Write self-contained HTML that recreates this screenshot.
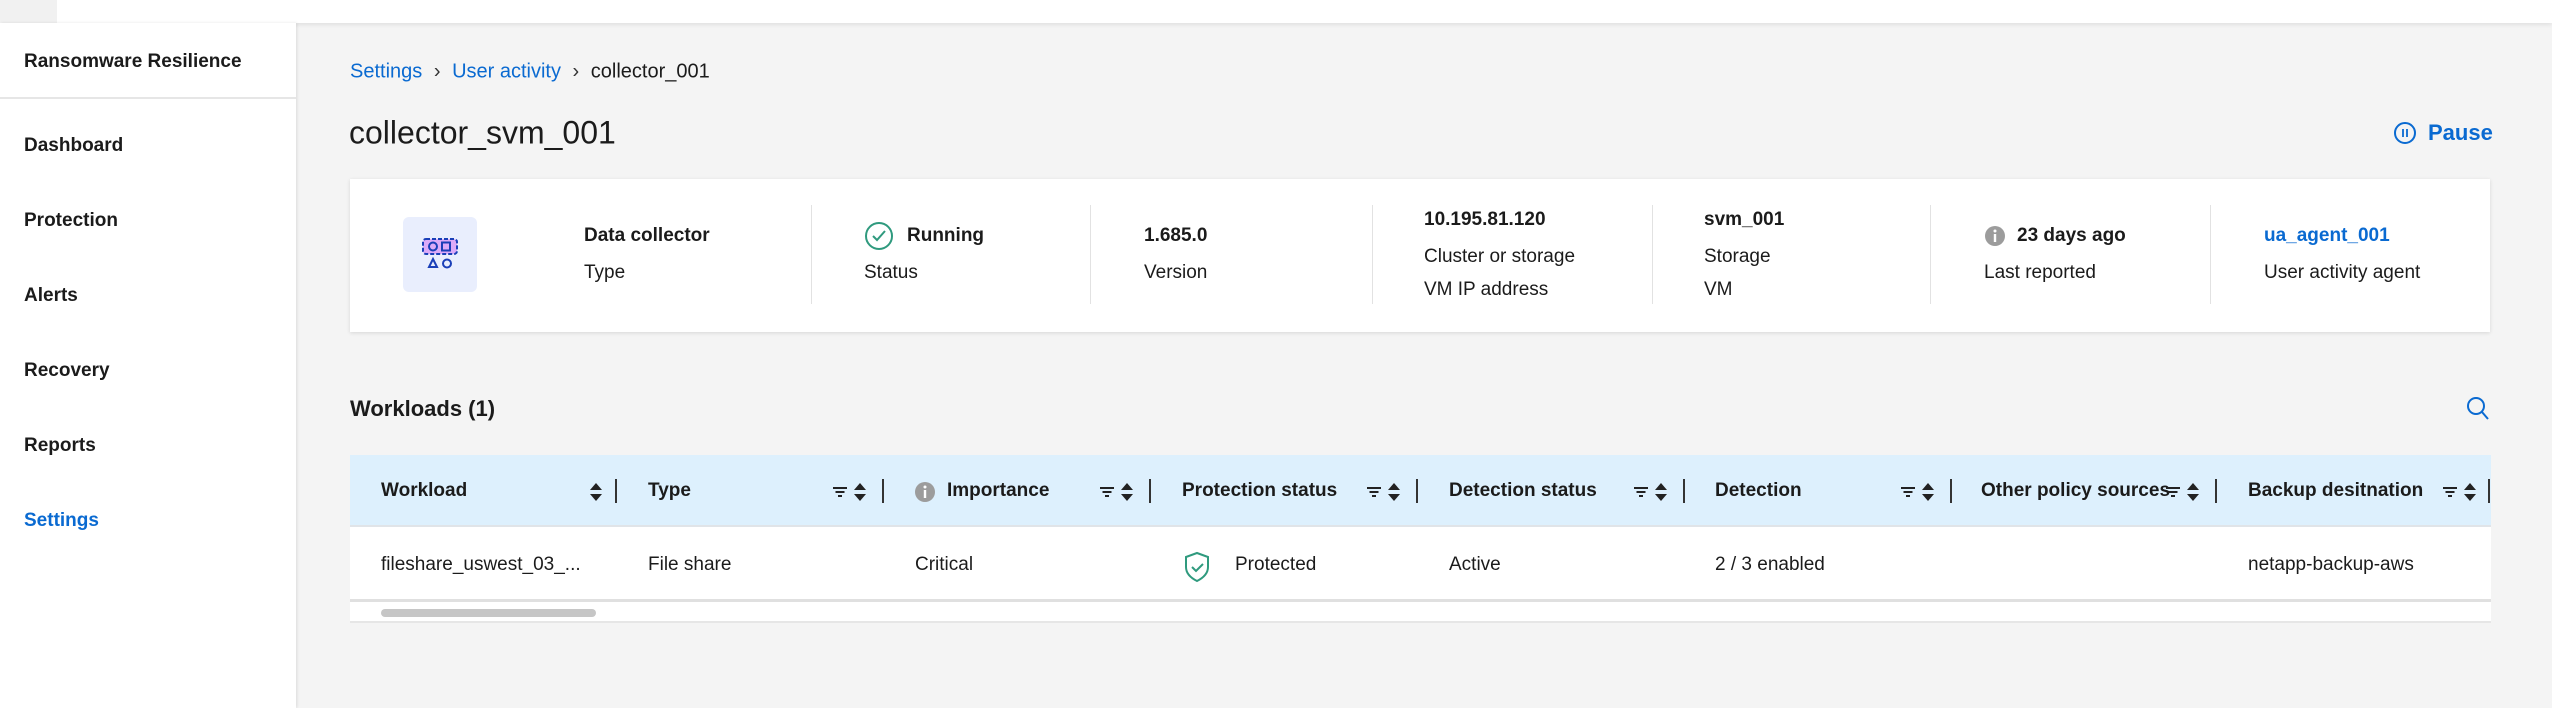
<!DOCTYPE html>
<html><head><meta charset="utf-8"><style>
*{margin:0;padding:0;box-sizing:border-box}
body{width:2552px;height:708px;overflow:hidden;background:#f4f4f4;font-family:"Liberation Sans",sans-serif;color:#1b1b1b;position:relative}
.a{position:absolute;white-space:nowrap}
.top{left:0;top:0;width:2552px;height:23px;background:#fff;box-shadow:0 2px 4px rgba(0,0,0,.08)}
.tl{left:0;top:0;width:57px;height:23px;background:#f1f1f1}
.side{left:0;top:23px;width:296px;height:685px;background:#fff;box-shadow:1px 0 3px rgba(0,0,0,.1)}
.nav{left:24px;font-size:19px;font-weight:bold;transform:translateY(-50%)}
.blue{color:#0a6ad1}
.mid{transform:translateY(-50%)}
.card{left:350px;top:179px;width:2140px;height:153px;background:#fff;box-shadow:0 1px 4px rgba(0,0,0,.12)}
.div{width:1px;top:205px;height:99px;background:#e2e2e2}
.b{font-weight:bold;font-size:19px}
.r{font-size:19px}
.th{left:350px;top:455px;width:2141px;height:72px;background:#ddf0fd;border-bottom:2px solid #e0e4e8}
.tr{left:350px;top:527px;width:2141px;height:75px;background:#fff;border-bottom:3px solid #e0e0e0}
.sb{left:350px;top:602px;width:2141px;height:21px;background:#fff;border-bottom:2px solid #e6e6e6}
.thumb{left:381px;top:609px;width:215px;height:8px;border-radius:4px;background:#c6c6c6}
.hd{font-weight:bold;font-size:19px;top:491px;transform:translateY(-50%)}
.cd{font-size:19px;top:565px;transform:translateY(-50%)}
.vd{width:1.5px;height:24px;top:479px;background:#333}
</style></head><body>
<div class="a top"></div><div class="a tl"></div>
<div class="a side"></div>
<div class="a nav" style="top:62px">Ransomware Resilience</div>
<div class="a" style="left:0;top:97px;width:296px;height:2px;background:#e6e6e6"></div>
<div class="a nav" style="top:146px">Dashboard</div>
<div class="a nav" style="top:221px">Protection</div>
<div class="a nav" style="top:296px">Alerts</div>
<div class="a nav" style="top:371px">Recovery</div>
<div class="a nav" style="top:446px">Reports</div>
<div class="a nav blue" style="top:521px">Settings</div>

<div class="a mid" style="left:350px;top:72px;font-size:20px"><span class="blue">Settings</span> <span style="margin:0 6px;color:#333">›</span> <span class="blue">User activity</span> <span style="margin:0 6px;color:#333">›</span> collector_001</div>
<div class="a mid" style="left:349px;top:133px;font-size:32px">collector_svm_001</div>
<svg class="a" style="left:2393px;top:121px" width="24" height="24" viewBox="0 0 24 24"><circle cx="12" cy="12" r="10" fill="none" stroke="#0a6ad1" stroke-width="2"/><path d="M10 8v8M14 8v8" stroke="#0a6ad1" stroke-width="1.8"/></svg>
<div class="a mid blue" style="left:2428px;top:133px;font-size:22px;font-weight:bold">Pause</div>

<div class="a card"></div>
<div class="a" style="left:403px;top:217px;width:74px;height:75px;background:#e9eefd;border-radius:6px"></div>
<svg class="a" style="left:420px;top:236px" width="40" height="36" viewBox="0 0 40 36"><rect x="3" y="3" width="34" height="15" rx="3" fill="#dcaaf8" stroke="#1a3fb8" stroke-width="2" stroke-dasharray="4 2"/><circle cx="13" cy="10.5" r="4" fill="none" stroke="#1a3fb8" stroke-width="2"/><rect x="22" y="6.5" width="8" height="8" fill="none" stroke="#1a3fb8" stroke-width="2"/><path d="M13 23l4 8h-8z" fill="none" stroke="#1a3fb8" stroke-width="2"/><circle cx="27" cy="27.5" r="4" fill="none" stroke="#1a3fb8" stroke-width="2"/></svg>
<div class="a b mid" style="left:584px;top:236px">Data collector</div>
<div class="a r mid" style="left:584px;top:273px">Type</div>
<div class="a div" style="left:811px"></div>
<svg class="a" style="left:864px;top:221px" width="30" height="30" viewBox="0 0 30 30"><circle cx="15" cy="15" r="13" fill="none" stroke="#2f9a7e" stroke-width="2"/><path d="M9 15l4 4 8-9" fill="none" stroke="#2f9a7e" stroke-width="2"/></svg>
<div class="a b mid" style="left:907px;top:236px">Running</div>
<div class="a r mid" style="left:864px;top:273px">Status</div>
<div class="a div" style="left:1090px"></div>
<div class="a b mid" style="left:1144px;top:236px">1.685.0</div>
<div class="a r mid" style="left:1144px;top:273px">Version</div>
<div class="a div" style="left:1372px"></div>
<div class="a b mid" style="left:1424px;top:220px">10.195.81.120</div>
<div class="a r mid" style="left:1424px;top:257px">Cluster or storage</div>
<div class="a r mid" style="left:1424px;top:290px">VM IP address</div>
<div class="a div" style="left:1652px"></div>
<div class="a b mid" style="left:1704px;top:220px">svm_001</div>
<div class="a r mid" style="left:1704px;top:257px">Storage</div>
<div class="a r mid" style="left:1704px;top:290px">VM</div>
<div class="a div" style="left:1930px"></div>
<svg class="a" style="left:1984px;top:225px" width="22" height="22" viewBox="0 0 22 22"><circle cx="11" cy="11" r="10" fill="#9c9c9c"/><rect x="9.8" y="9" width="2.4" height="8" fill="#fff"/><circle cx="11" cy="6" r="1.5" fill="#fff"/></svg>
<div class="a b mid" style="left:2017px;top:236px">23 days ago</div>
<div class="a r mid" style="left:1984px;top:273px">Last reported</div>
<div class="a div" style="left:2210px"></div>
<div class="a b mid blue" style="left:2264px;top:236px">ua_agent_001</div>
<div class="a r mid" style="left:2264px;top:273px">User activity agent</div>

<div class="a mid" style="left:350px;top:409px;font-size:22px;font-weight:bold">Workloads (1)</div>
<svg class="a" style="left:2466px;top:396px" width="24" height="26" viewBox="0 0 24 26"><circle cx="10" cy="10" r="8" fill="none" stroke="#0a6ad1" stroke-width="2"/><path d="M16 16l6 7" stroke="#0a6ad1" stroke-width="2"/></svg>

<div class="a th"></div>
<div class="a tr"></div>
<div class="a sb"></div>
<div class="a thumb"></div>

<div class="a hd" style="left:381px">Workload</div>
<div class="a hd" style="left:648px">Type</div>
<svg class="a" style="left:914px;top:481px" width="22" height="22" viewBox="0 0 22 22"><circle cx="11" cy="11" r="10" fill="#9c9c9c"/><rect x="9.8" y="9" width="2.4" height="8" fill="#fff"/><circle cx="11" cy="6" r="1.5" fill="#fff"/></svg>
<div class="a hd" style="left:947px">Importance</div>
<div class="a hd" style="left:1182px">Protection status</div>
<div class="a hd" style="left:1449px">Detection status</div>
<div class="a hd" style="left:1715px">Detection</div>
<div class="a hd" style="left:1981px">Other policy sources</div>
<div class="a hd" style="left:2248px">Backup desitnation</div>

<svg class="a" style="left:589px;top:481px" width="14" height="22" viewBox="0 0 14 22"><path d="M7 2l6 7H1zM7 20l6-7H1z" fill="#222"/></svg>
<div class="a vd" style="left:615px"></div>
<svg class="a" style="left:832px;top:481px" width="36" height="22" viewBox="0 0 36 22"><path d="M1 7h14M3.5 11h9M6 15h4" stroke="#222" stroke-width="2"/><path d="M28 2l6 7h-12zM28 20l6-7h-12z" fill="#222"/></svg>
<div class="a vd" style="left:882px"></div>
<svg class="a" style="left:1099px;top:481px" width="36" height="22" viewBox="0 0 36 22"><path d="M1 7h14M3.5 11h9M6 15h4" stroke="#222" stroke-width="2"/><path d="M28 2l6 7h-12zM28 20l6-7h-12z" fill="#222"/></svg>
<div class="a vd" style="left:1149px"></div>
<svg class="a" style="left:1366px;top:481px" width="36" height="22" viewBox="0 0 36 22"><path d="M1 7h14M3.5 11h9M6 15h4" stroke="#222" stroke-width="2"/><path d="M28 2l6 7h-12zM28 20l6-7h-12z" fill="#222"/></svg>
<div class="a vd" style="left:1416px"></div>
<svg class="a" style="left:1633px;top:481px" width="36" height="22" viewBox="0 0 36 22"><path d="M1 7h14M3.5 11h9M6 15h4" stroke="#222" stroke-width="2"/><path d="M28 2l6 7h-12zM28 20l6-7h-12z" fill="#222"/></svg>
<div class="a vd" style="left:1683px"></div>
<svg class="a" style="left:1900px;top:481px" width="36" height="22" viewBox="0 0 36 22"><path d="M1 7h14M3.5 11h9M6 15h4" stroke="#222" stroke-width="2"/><path d="M28 2l6 7h-12zM28 20l6-7h-12z" fill="#222"/></svg>
<div class="a vd" style="left:1950px"></div>
<svg class="a" style="left:2165px;top:481px" width="36" height="22" viewBox="0 0 36 22"><path d="M1 7h14M3.5 11h9M6 15h4" stroke="#222" stroke-width="2"/><path d="M28 2l6 7h-12zM28 20l6-7h-12z" fill="#222"/></svg>
<div class="a vd" style="left:2215px"></div>
<svg class="a" style="left:2442px;top:481px" width="36" height="22" viewBox="0 0 36 22"><path d="M1 7h14M3.5 11h9M6 15h4" stroke="#222" stroke-width="2"/><path d="M28 2l6 7h-12zM28 20l6-7h-12z" fill="#222"/></svg>
<div class="a vd" style="left:2488px"></div>

<div class="a cd" style="left:381px">fileshare_uswest_03_...</div>
<div class="a cd" style="left:648px">File share</div>
<div class="a cd" style="left:915px">Critical</div>
<svg class="a" style="left:1183px;top:551px" width="28" height="32" viewBox="0 0 28 32"><path d="M14 2l11 4v10c0 7-5 11-11 14C8 27 3 23 3 16V6z" fill="none" stroke="#2f9a7e" stroke-width="2"/><path d="M9 16l4 4 7-7" fill="none" stroke="#2f9a7e" stroke-width="2"/></svg>
<div class="a cd" style="left:1235px">Protected</div>
<div class="a cd" style="left:1449px">Active</div>
<div class="a cd" style="left:1715px">2 / 3 enabled</div>
<div class="a cd" style="left:2248px">netapp-backup-aws</div>
</body></html>
